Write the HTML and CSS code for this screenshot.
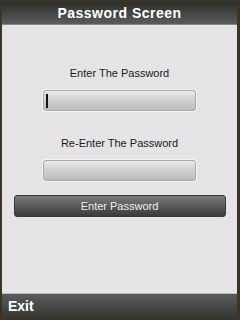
FILE: index.html
```html
<!DOCTYPE html>
<html lang="en">
<head>
    <meta charset="UTF-8">
    <title>Password Screen</title>
    <link rel="stylesheet" href="styles.css">
</head>
<body>
    <div class="frame">
        <div class="titlebar">Password Screen</div>
        <div class="content">
            <div class="label first">Enter The Password</div>
            <div class="field"><span class="cursor"></span></div>
            <div class="label second">Re-Enter The Password</div>
            <div class="field"></div>
            <div class="button">Enter Password</div>
        </div>
        <div class="softkeys">Exit</div>
    </div>
</body>
</html>
```

FILE: styles.css
```css
html, body {
    margin: 0;
    padding: 0;
}
body {
    width: 240px;
    height: 320px;
    background: #3d3426;
    font-family: 'Liberation Sans', Arial, sans-serif;
}
.frame {
    display: flex;
    flex-direction: column;
    height: 316px;
    padding: 2px 3px 2px 2px;
}
.titlebar {
    height: 22px;
    line-height: 23px;
    text-align: center;
    color: #ffffff;
    font-size: 14px;
    font-weight: bold;
    letter-spacing: 0.5px;
    background: linear-gradient(to bottom, #2c2f2c, #474a47 60%, #5a5d5a);
    border-bottom: 1px solid #8a8a8a;
}
.content {
    flex: 1;
    background: #e5e3e6;
    display: flex;
    flex-direction: column;
    align-items: center;
    border-bottom: 1px solid #bdbdbd;
}
.label {
    font-size: 11px;
    color: #1a1a1a;
    height: 13px;
    line-height: 13px;
}
.label.first {
    margin-top: 42px;
    margin-bottom: 10px;
}
.label.second {
    margin-top: 26px;
    margin-bottom: 10px;
}
.field {
    width: 151px;
    height: 19px;
    border: 1px solid #a9a9a9;
    border-radius: 3px;
    background: linear-gradient(to bottom, #eaeaea, #cfcfcf 50%, #bdbdbd);
    display: flex;
    align-items: center;
    box-shadow: 0 0 0 1px #f4f4f4;
}
.cursor {
    width: 2px;
    height: 14px;
    margin-left: 2px;
    background: #111111;
}
.button {
    margin-top: 14px;
    width: 210px;
    height: 20px;
    line-height: 20px;
    text-align: center;
    color: #eeeeee;
    font-size: 11px;
    border: 1px solid #2f3b3b;
    border-radius: 3px;
    background: linear-gradient(to bottom, #7a7a7a, #5a5a5a 50%, #3a3a3a);
}
.softkeys {
    height: 24px;
    line-height: 24px;
    padding-left: 6px;
    color: #ffffff;
    font-size: 14px;
    font-weight: bold;
    background: linear-gradient(to bottom, #5a5c5a, #454745 60%, #343634);
}
```
